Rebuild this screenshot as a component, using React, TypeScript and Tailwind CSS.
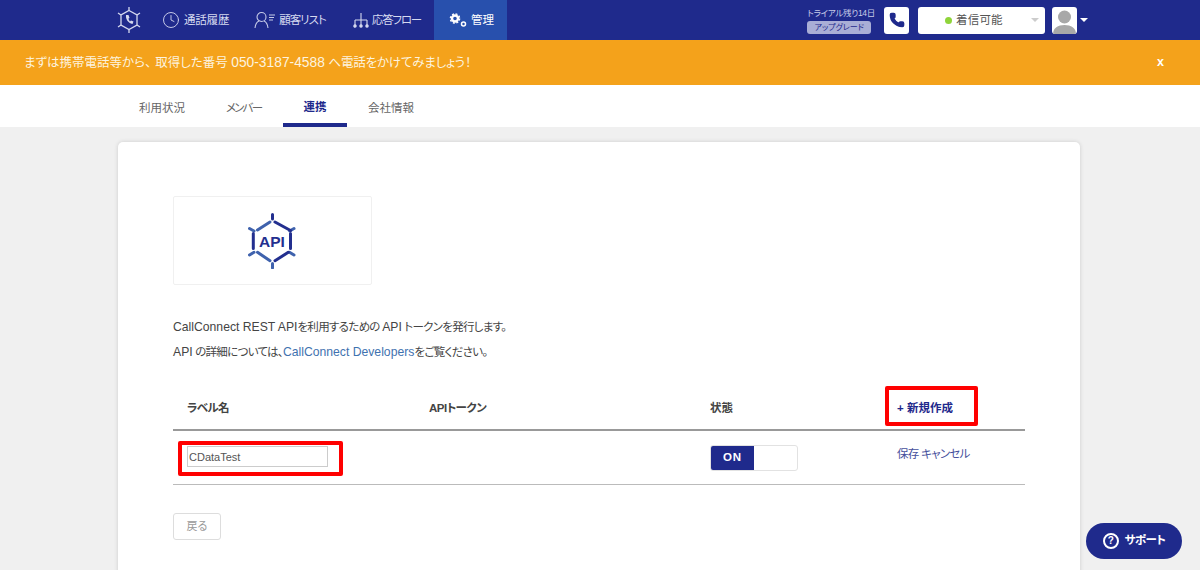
import { Clock, Phone } from 'lucide-react';

const font = { fontFamily: '"Liberation Sans", "Noto Sans CJK JP", sans-serif' };

function HexLogo() {
  return (
    <svg width="26" height="28" viewBox="0 0 26 28" fill="none" stroke="#d5d9ef" strokeWidth="1.3">
      <path d="M13 4.500 21 9v10l-8 4.500-8-4.500V9z" />
      <path d="M13 1v3.500M13 23.500V27M21 9l3-2M5 9 2 7M21 19l3 2M5 19l-3 2" />
      <path d="M10 9c-.5 4 2 8 6.500 9l1-2.500-2.500-1-1 1c-1-1-1.500-2-1.500-3l1-.5-1-3z" fill="#d5d9ef" stroke="none" />
    </svg>
  );
}

function PersonIcon() {
  return (
    <svg width="22" height="18" viewBox="0 0 22 18" fill="none" stroke="#c6cbe8" strokeWidth="1.100">
      <circle cx="7.500" cy="6" r="4.500" />
      <path d="M1 17c.5-4 2.500-6.500 4-7M14 17c-.5-4-2.500-6.500-4-7" />
      <path d="M15 4h6M15 6.500h5M15 9h4" />
    </svg>
  );
}

function FlowIcon() {
  return (
    <svg width="16" height="16" viewBox="0 0 16 16" fill="none" stroke="#d5d9ef" strokeWidth="1.100">
      <path d="M8 1v7M2 8h12M2 8v5M8 8v5M14 8v5" />
      <circle cx="2" cy="14" r="1.200" fill="#d5d9ef" />
      <circle cx="8" cy="14" r="1.200" fill="#d5d9ef" />
      <circle cx="14" cy="14" r="1.200" fill="#d5d9ef" />
    </svg>
  );
}

function GearsIcon() {
  return (
    <svg width="18" height="15" viewBox="0 0 18 15" fill="none" stroke="white">
      <circle cx="6" cy="5.500" r="3" strokeWidth="2.400" />
      <circle cx="6" cy="5.500" r="4.600" strokeWidth="1.400" strokeDasharray="2 1.610" />
      <circle cx="14.500" cy="11" r="2" strokeWidth="1.500" />
    </svg>
  );
}

function ApiLogo() {
  return (
    <svg width="50" height="56" viewBox="0 0 50 56" fill="none" strokeLinecap="round" strokeWidth="3">
      <path d="M1.500 15.500 6 18M46 15.500 41.700 18M1.500 42 6 39.300M46 42l-4.500-2.700M24.500 50.500v4.500" stroke="#3f62ad" />
      <path d="M9.500 17 22 9M9.500 39.300 22 47.700" stroke="#3f62ad" />
      <path d="M24.500 1.500V6M27 9l15.500 8.500M40.300 39.300 27 47.700M5.300 20.500v15M42.500 20.500v15" stroke="#232f8f" />
      <text x="24" y="34.300" textAnchor="middle" fontSize="15.500" fontWeight="700" fill="#232f8f" stroke="none">API</text>
    </svg>
  );
}

export default function App() {
  return (
    <div style={font} className="relative h-[570px] w-[1200px] overflow-hidden bg-[#f0f0f0] [font-feature-settings:'palt']">
      <div className="flex h-10 items-center bg-[#1f2a8c] pl-[116px] pr-[112px] text-[11.500px] text-[#d5d9ef]">
        <HexLogo />
        <div className="ml-5 flex items-center">
          <Clock size={18} strokeWidth={1.300} className="text-[#c6cbe8]" />
          <span className="ml-1 pt-[2px] tracking-[-0.2px]">通話履歴</span>
        </div>
        <div className="ml-[25px] flex items-center">
          <PersonIcon />
          <span className="ml-[3px] pt-[2px] tracking-[-1px]">顧客リスト</span>
        </div>
        <div className="ml-[27px] flex items-center">
          <FlowIcon />
          <span className="ml-[3px] pt-[2px] tracking-[-1.200px]">応答フロー</span>
        </div>
        <div className="ml-[13px] flex h-10 w-[73px] items-center bg-[#2850ad] pl-[15px] text-white">
          <GearsIcon />
          <span className="ml-[4px] pt-[2px]">管理</span>
        </div>
        <div className="ml-auto flex flex-col items-start">
          <span className="text-[8.500px] leading-3 tracking-[-0.3px] text-[#c6cbe8]">トライアル残り14日</span>
          <span className="mt-[2px] h-[13px] w-[64px] rounded-[3px] bg-[#a9aed6] text-center text-[8px] leading-[13px] text-[#1f2a8c]">
            アップグレード
          </span>
        </div>
        <div className="ml-[9px] flex h-[27px] w-[25px] items-center justify-center rounded-[3px] bg-white">
          <Phone size={16} fill="#1f2a8c" stroke="#1f2a8c" />
        </div>
        <div className="ml-[9px] flex h-[27px] w-[127px] items-center rounded-[3px] bg-white pl-[27px] text-[#555]">
          <span className="h-[7px] w-[7px] rounded-full bg-[#8fd43a]" />
          <span className="ml-[4px] pt-[2px] tracking-[0.2px]">着信可能</span>
          <span className="ml-auto mr-[6px] h-0 w-0 border-x-[4px] border-t-[4px] border-x-transparent border-t-[#ccc]" />
        </div>
        <div className="ml-[7px] h-[27px] w-[25px] overflow-hidden rounded-[3px] bg-white">
          <svg width="25" height="27" viewBox="0 0 25 27" fill="#a8a8a8">
            <circle cx="12.500" cy="10" r="6.500" />
            <path d="M1 27c0-6 5-9 11.500-9S24 21 24 27z" />
          </svg>
        </div>
        <span className="ml-[3px] h-0 w-0 border-x-[4px] border-t-[4px] border-x-transparent border-t-white" />
      </div>

      <div className="flex h-[45px] items-center justify-between bg-[#f4a21b] pl-6 pr-9 text-[12.500px] text-[#fdf3df]">
        <span className="pt-[1px]">
          まずは携帯電話等から、<span className="ml-[4px]">取得した番号</span> <span className="text-[13.800px]">050-3187-4588</span>{' '}
          <span className="tracking-[-0.15px]">へ電話をかけてみましょう！</span>
        </span>
        <span className="font-bold text-white">x</span>
      </div>

      <div className="flex h-[42px] items-center bg-white pl-[139px] text-[11.500px] text-[#666]">
        <span className="w-[87px] pt-[6px]">利用状況</span>
        <span className="w-[57px] pt-[6px] tracking-[-1.800px]">メンバー</span>
        <span className="flex h-[42px] w-[64px] items-center justify-center border-b-4 border-[#1f2a8c] pt-[8px] font-bold text-[#1f2a8c]">
          連携
        </span>
        <span className="ml-[21px] pt-[6px]">会社情報</span>
      </div>

      <div className="ml-[118px] mt-[15px] h-[500px] w-[962px] rounded-[5px] bg-white px-[55px] pt-[54px] text-[11.500px] text-[#444] shadow-[0_0_4px_rgba(0,0,0,0.15)]">
        <div className="flex h-[89px] w-[199px] items-center justify-center rounded-[2px] border border-[#f0f0f0]">
          <ApiLogo />
        </div>

        <p className="mt-[34px] leading-4 tracking-[-0.7px]">
          <span className="text-[12.200px] tracking-normal">CallConnect REST API</span>を利用するための <span className="text-[12.200px] tracking-normal">API</span> トークンを発行します。
        </p>
        <p className="mt-[9px] leading-4 tracking-[-0.7px]">
          <span className="text-[12.200px] tracking-normal">API</span> の詳細については、<span className="text-[12.200px] tracking-normal text-[#3f72af]">CallConnect Developers</span>をご覧ください。
        </p>

        <div className="mt-[19px] w-[852px]">
          <div className="flex h-[52px] items-center border-b-2 border-[#999] pl-[14px] pt-[9px] font-bold">
            <span className="w-[242px] tracking-[-0.7px]">ラベル名</span>
            <span className="w-[281px] tracking-[-0.5px]">APIトークン</span>
            <span className="w-[187px]">状態</span>
            <span className="relative text-[#1f2a8c]">
              + 新規作成
              <span className="absolute -left-3 -top-[14px] h-10 w-[93px] rounded-[2px] border-[4px] border-[#ff0000]" />
            </span>
          </div>
          <div className="flex h-[54px] items-center border-b border-[#bbb] pl-[14px]">
            <div className="relative mb-[2px] w-[242px]">
              <input
                readOnly
                value="CDataTest"
                className="block h-[21px] w-[141px] border border-[#ccc] px-[1px] text-[11px] text-[#555] outline-none"
              />
              <span className="absolute -left-[9px] -top-[5px] h-[35px] w-[165px] rounded-[2px] border-[4px] border-[#ff0000]" />
            </div>
            <div className="w-[281px]" />
            <div className="flex h-[26px] w-[88px] overflow-hidden rounded-[3px] border border-[#e2e2e2]">
              <span className="flex w-[43px] items-center justify-center bg-[#1f2a8c] font-bold tracking-[1px] text-white">ON</span>
            </div>
            <div className="mb-[6px] ml-[99px] tracking-[-0.7px] text-[#46509c]">保存 キャンセル</div>
          </div>
          <button className="mt-[28px] block h-[27px] w-[48px] rounded-[3px] border border-[#ddd] text-[11px] text-[#999]">
            戻る
          </button>
        </div>
      </div>

      <button className="absolute left-[1086px] top-[523px] flex h-9 w-24 items-center justify-center rounded-full bg-[#1f2a8c] text-[11.500px] font-bold tracking-[-0.5px] text-white">
        <span className="mr-[6px] flex h-4 w-4 items-center justify-center rounded-full border-2 border-white text-[10px] leading-none">
          ?
        </span>
        サポート
      </button>
    </div>
  );
}
